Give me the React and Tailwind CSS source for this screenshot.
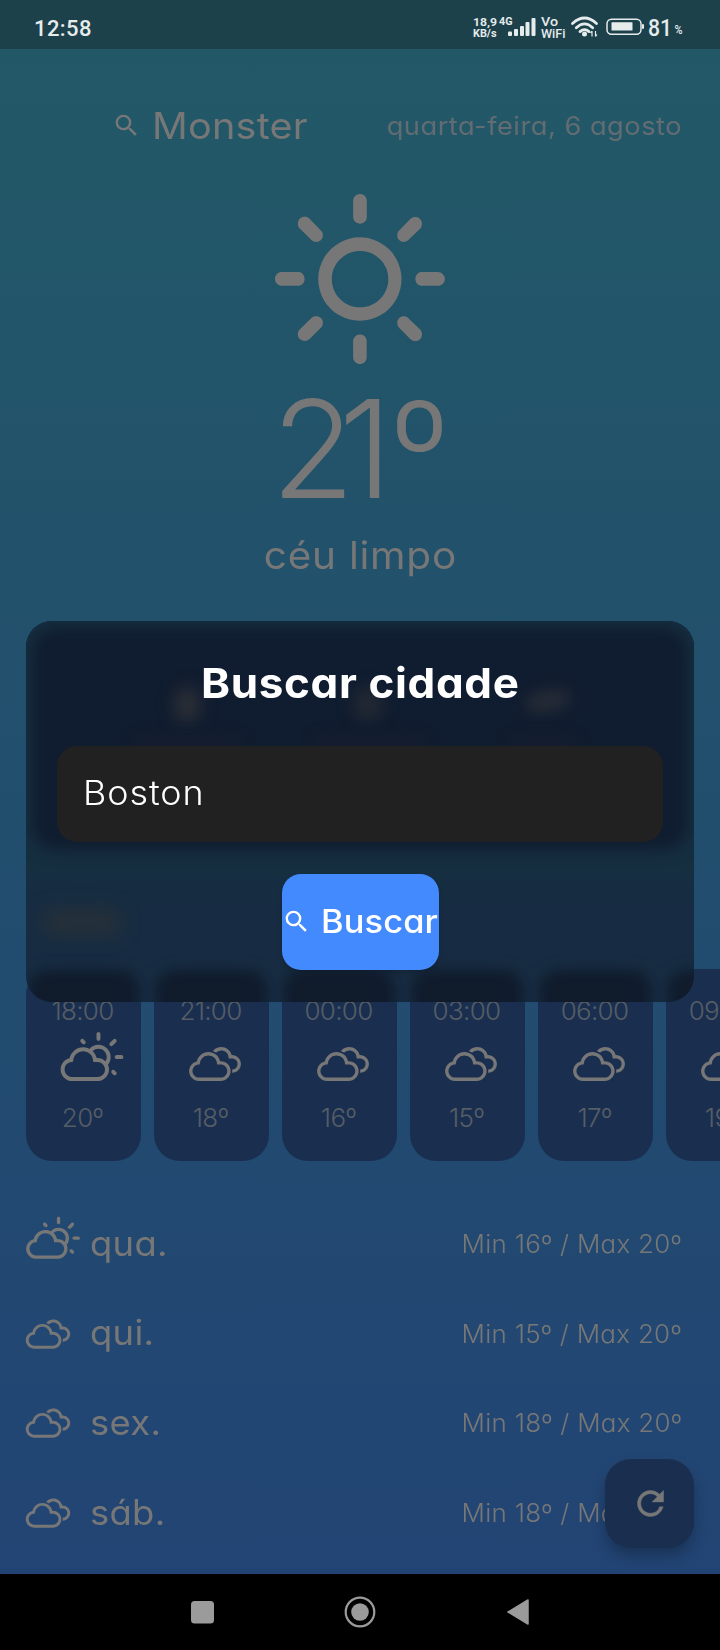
import { MdSearch } from 'react-icons/md';
import { WiDaySunny, WiCloudy, WiDayCloudy } from 'react-icons/wi';

const hours = [
  ['18:00', '20º', true], ['21:00', '18º'], ['00:00', '16º'], ['03:00', '15º'], ['06:00', '17º'], ['09:00', '19º'],
];
const days = [
  ['qua.', 'Min 16º / Max 20º', true], ['qui.', 'Min 15º / Max 20º'], ['sex.', 'Min 18º / Max 20º'], ['sáb.', 'Min 18º / Max 20º'],
];

function StatusBar() {
  return (
    <div className="flex h-[49px] shrink-0 items-center bg-[#1c414b] pl-[34px] font-['Roboto',sans-serif] text-[#e6ebec]">
      <span className="mt-[9px] text-[22px] font-medium leading-none tracking-[0.4px]">12:58</span>
      <svg className="ml-auto" width="250" height="49" viewBox="470 0 250 49" fill="currentColor">
        <g fontFamily="Roboto" fontWeight="700" fontSize="11.5">
          <text x="473" y="26" textLength="24" lengthAdjust="spacingAndGlyphs">18,9</text>
          <text x="473" y="37.3" textLength="23.5" lengthAdjust="spacingAndGlyphs">KB/s</text>
          <text x="499" y="25.2" textLength="13.5" lengthAdjust="spacingAndGlyphs" fontSize="10.5">4G</text>
        </g>
        <rect x="508" y="31.5" width="4" height="4.5" rx="1" />
        <rect x="514" y="29" width="4" height="7" rx="1" />
        <rect x="520" y="26" width="4" height="10" rx="1" />
        <rect x="525.5" y="22" width="4" height="14" rx="1" />
        <rect x="531.5" y="18" width="4" height="18" rx="1" />
        <g fontFamily="Roboto" fontWeight="500">
          <text x="541" y="25.5" fontSize="13.5" textLength="17" lengthAdjust="spacingAndGlyphs">Vo</text>
          <text x="541" y="37.5" fontSize="12.5" textLength="24.5" lengthAdjust="spacingAndGlyphs">WiFi</text>
        </g>
        <g fill="none" stroke="currentColor" strokeWidth="2.8" strokeLinecap="round">
          <path d="M572.5 23.5 Q584.5 12.5 596.5 23.5" />
          <path d="M576.3 27.8 Q584.5 20 592.7 27.8" />
          <path d="M580 31.6 Q584.5 27.6 589 31.6" />
        </g>
        <circle cx="584.5" cy="34" r="2.5" />
        <path d="M592 31v5.5M590.5 33l1.5-2M595.5 31v5.5M597 34.5l-1.5 2" stroke="currentColor" strokeWidth="1.2" />
        <rect x="607" y="19.2" width="34" height="15" rx="4.5" fill="none" stroke="currentColor" strokeWidth="1.5" />
        <rect x="611.5" y="22.2" width="21" height="8.3" rx="0.5" />
        <rect x="642" y="24" width="2" height="5" rx="1" />
        <text x="648" y="36" fontFamily="Roboto" fontWeight="500" fontSize="23" textLength="24" lengthAdjust="spacingAndGlyphs">81</text>
        <text x="674.5" y="34" fontFamily="Roboto" fontWeight="500" fontSize="12" textLength="8" lengthAdjust="spacingAndGlyphs">%</text>
      </svg>
    </div>
  );
}

function Hour({ time, temp, sunny }) {
  return (
    <div className="flex h-[192px] w-[115px] shrink-0 flex-col items-center rounded-[26px] bg-[#1a2f50] text-[#565d65]">
      <span className="mr-[2px] mt-[29px] text-[26px] font-light leading-[26px] tracking-[-0.7px]">{time}</span>
      <div className={`mt-1.5 flex h-[70px] w-full justify-center text-[#777777] ${sunny ? 'pl-[17px]' : 'pl-[6px]'}`}>
        {sunny ? <WiDayCloudy className="size-[70px]" /> : <WiCloudy className="size-[70px]" />}
      </div>
      <span className="mr-[2px] mt-[5px] text-[26px] font-light leading-[26px] tracking-[-0.6px]">{temp}</span>
    </div>
  );
}

function Modal() {
  return (
    <div className="absolute left-[26px] top-[621px] h-[381px] w-[668px] overflow-hidden rounded-[26px] bg-[#172c42]">
      <div className="absolute inset-x-0 top-0 h-[260px] bg-[#152f40]" />
      <div className="absolute inset-x-0 top-[240px] h-[50px] bg-linear-to-b from-[#152f40] to-[#172c42]" />
      <div className="absolute left-[6px] top-[6px] h-[223px] w-[656px] rounded-[24px] bg-[#101c2f] blur-[8px]" />
      <div className="absolute left-[148px] top-[66px] h-[36px] w-[26px] rounded-full bg-[#2b2e36] blur-[8px]" />
      <div className="absolute left-[328px] top-[66px] h-[34px] w-[28px] rounded-full bg-[#232934] blur-[8px]" />
      <div className="absolute left-[500px] top-[70px] h-[20px] w-[44px] -rotate-12 rounded-full bg-[#252b36] blur-[7px]" />
      <div className="absolute left-[106px] top-[114px] h-[16px] w-[112px] rounded-full bg-[#151e30] blur-[6px]" />
      <div className="absolute left-[286px] top-[114px] h-[16px] w-[116px] rounded-full bg-[#151e30] blur-[6px]" />
      <div className="absolute left-[482px] top-[114px] h-[16px] w-[70px] rounded-full bg-[#151e30] blur-[6px]" />
      <div className="absolute left-[16px] top-[288px] h-[26px] w-[80px] rounded-full bg-[#263038] blur-[9px]" />
      <div className="absolute left-[2px] top-[349px] flex gap-[17px] blur-[7px]">
        {hours.map(([t]) => <div key={t} className="h-[60px] w-[111px] shrink-0 rounded-[20px] bg-[#101b2c]" />)}
      </div>
      <div className="relative flex flex-col items-center text-white">
        <span className="mt-[42px] scale-x-[1.06] text-[41.5px] font-bold leading-[40px] tracking-[0.6px]">Buscar cidade</span>
        <div className="mt-[43px] flex h-24 w-[606px] items-center rounded-[20px] bg-[#212121] pl-[26px]">
          <span className="-mt-px origin-left scale-x-[1.07] text-[33.5px] font-light tracking-[0.9px]">Boston</span>
        </div>
        <div className="mt-8 flex h-24 w-[157px] items-center overflow-hidden rounded-[19px] bg-[#448aff] shadow-md">
          <MdSearch className="-mt-px size-[29px] shrink-0" />
          <span className="ml-[10px] origin-left scale-x-[1.06] text-[32.5px] font-medium tracking-[0.1px]">Buscar</span>
        </div>
      </div>
    </div>
  );
}

export default function App() {
  return (
    <div className="relative flex h-[1650px] w-[720px] flex-col overflow-hidden bg-linear-to-b from-[#225966] via-[#224f6d] via-45% to-[#224375] font-['Inter',sans-serif] text-[#777777] [font-feature-settings:'cv11']">
      <StatusBar />
      <header className="flex h-[154px] shrink-0 items-center pl-[112px] pr-[37.5px]">
        <MdSearch className="-mt-px size-[29px]" />
        <span className="ml-[11px] origin-left scale-x-[1.07] text-[37px] tracking-[0.2px]">Monster</span>
        <span className="ml-auto origin-right scale-x-[1.07] text-[25.5px] tracking-[0.45px] text-[#626c72]">quarta-feira, 6 agosto</span>
      </header>
      <WiDaySunny className="-mt-[41px] size-[240px] shrink-0 self-center" />
      <span className="-mt-[3px] self-center text-[136px] font-light leading-[99px]">
        <span className="tracking-[-16px]">2</span><span className="tracking-[-2px]">1</span>º
      </span>
      <span className="mt-[38px] scale-x-[1.08] self-center text-[37.5px] leading-[40px] tracking-[0.7px]">céu limpo</span>
      <div className="mx-[26px] mt-[45px] h-[230px] shrink-0 rounded-[26px] bg-[#1a2f50]" />
      <div className="ml-[26px] mt-[118px] flex gap-[13px]">
        {hours.map(([t, d, s]) => <Hour key={t} time={t} temp={d} sunny={s} />)}
      </div>
      <div className="mt-[37px] flex flex-col pl-[26px] pr-[38px]">
        {days.map(([d, t, s]) => (
          <div key={d} className="flex h-[89.7px] items-center">
            <div className="mt-1 w-[63.5px] shrink-0">
              {s ? <WiDayCloudy className="-ml-[3.5px] size-[60px]" /> : <WiCloudy className="-ml-[8px] size-[60px]" />}
            </div>
            <span className="origin-left scale-x-[1.04] text-[35px] tracking-[0.3px]">{d}</span>
            <span className="ml-auto mt-1 origin-right scale-x-[1.03] text-[25.2px] font-light tracking-[0.27px]">{t}</span>
          </div>
        ))}
      </div>
      <div className="absolute left-[605px] top-[1459px] flex size-[89px] items-center justify-center rounded-[26px] bg-[#1a2f50] shadow-[0_8px_14px_rgba(0,0,0,0.25)]">
        <svg className="ml-px size-[39px]" viewBox="0 0 24 24" fill="currentColor" stroke="currentColor" strokeWidth="0.3">
          <path d="M17.65 6.35A7.958 7.958 0 0012 4c-4.42 0-7.990 3.580-7.990 8s3.570 8 7.990 8c3.730 0 6.840-2.550 7.730-6h-2.080A5.990 5.990 0 0112 18c-3.310 0-6-2.690-6-6s2.690-6 6-6c1.660 0 3.140.69 4.220 1.780L13 11h7V4l-2.350 2.350z" />
        </svg>
      </div>
      <Modal />
      <nav className="absolute inset-x-0 bottom-0 h-[76px] bg-black">
        <svg width="720" height="76" fill="#9b9b9b">
          <rect x="191" y="27" width="23" height="22.5" rx="3.5" />
          <circle cx="360" cy="38" r="8.8" />
          <circle cx="360" cy="38" r="14.3" fill="none" stroke="#9b9b9b" strokeWidth="2.2" />
          <path d="M508 38 528 26v24z" stroke="#9b9b9b" strokeWidth="1.5" strokeLinejoin="round" />
        </svg>
      </nav>
    </div>
  );
}
